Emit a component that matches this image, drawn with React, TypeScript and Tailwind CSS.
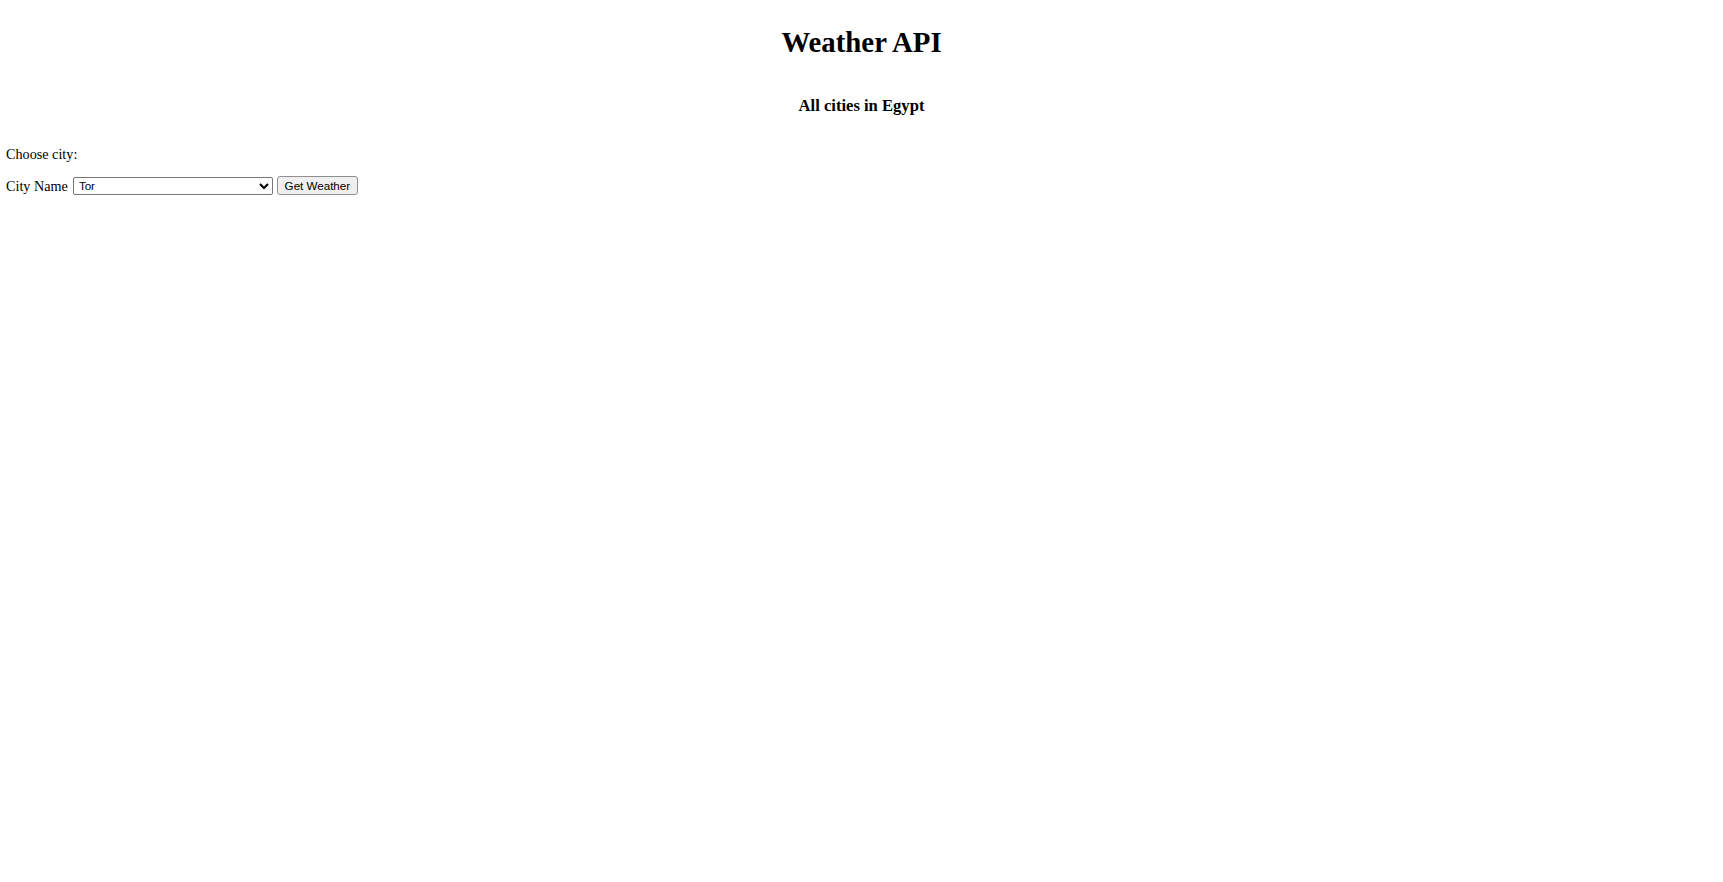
import { useState } from "react"

const cities = ["Tor", "Cairo", "Alexandria", "Giza", "Luxor", "Aswan", "Port Said", "Suez", "Ismailia", "Hurghada"]

const App = () => {
    const [city, setCity] = useState("Tor")

    return (
        <div className="min-h-screen bg-white text-black font-['Liberation_Serif','Times_New_Roman',serif] pt-[24px] px-[6px]">
            <h1 className="text-center text-[28.8px] leading-[36px] font-bold">Weather API</h1>
            <h3 className="text-center text-[16.6px] leading-[24px] font-bold mt-[34px]">All cities in Egypt</h3>
            <p className="text-[14.2px] leading-[20px] mt-[26px]">Choose city:</p>
            <div className="flex items-center h-[19px] mt-[12px] text-[14.2px] leading-[20px]">
                <label htmlFor="city">City Name</label>
                <select
                    id="city"
                    value={city}
                    onChange={(e) => setCity(e.target.value)}
                    className="ml-[5px] w-[200px] h-[18px] border border-[#767676] rounded-[2px] bg-white text-[11.6px] leading-none text-black font-['Liberation_Sans',Arial,sans-serif] pl-[1px]"
                >
                    {cities.map((c) => (
                        <option key={c} value={c}>{c}</option>
                    ))}
                </select>
                <button className="ml-[4px] w-[81px] h-[19px] border border-[#8f8f8f] rounded-[3px] bg-[#efefef] text-[11.6px] leading-none text-black font-['Liberation_Sans',Arial,sans-serif]">
                    Get Weather
                </button>
            </div>
        </div>
    )
}

export default App
